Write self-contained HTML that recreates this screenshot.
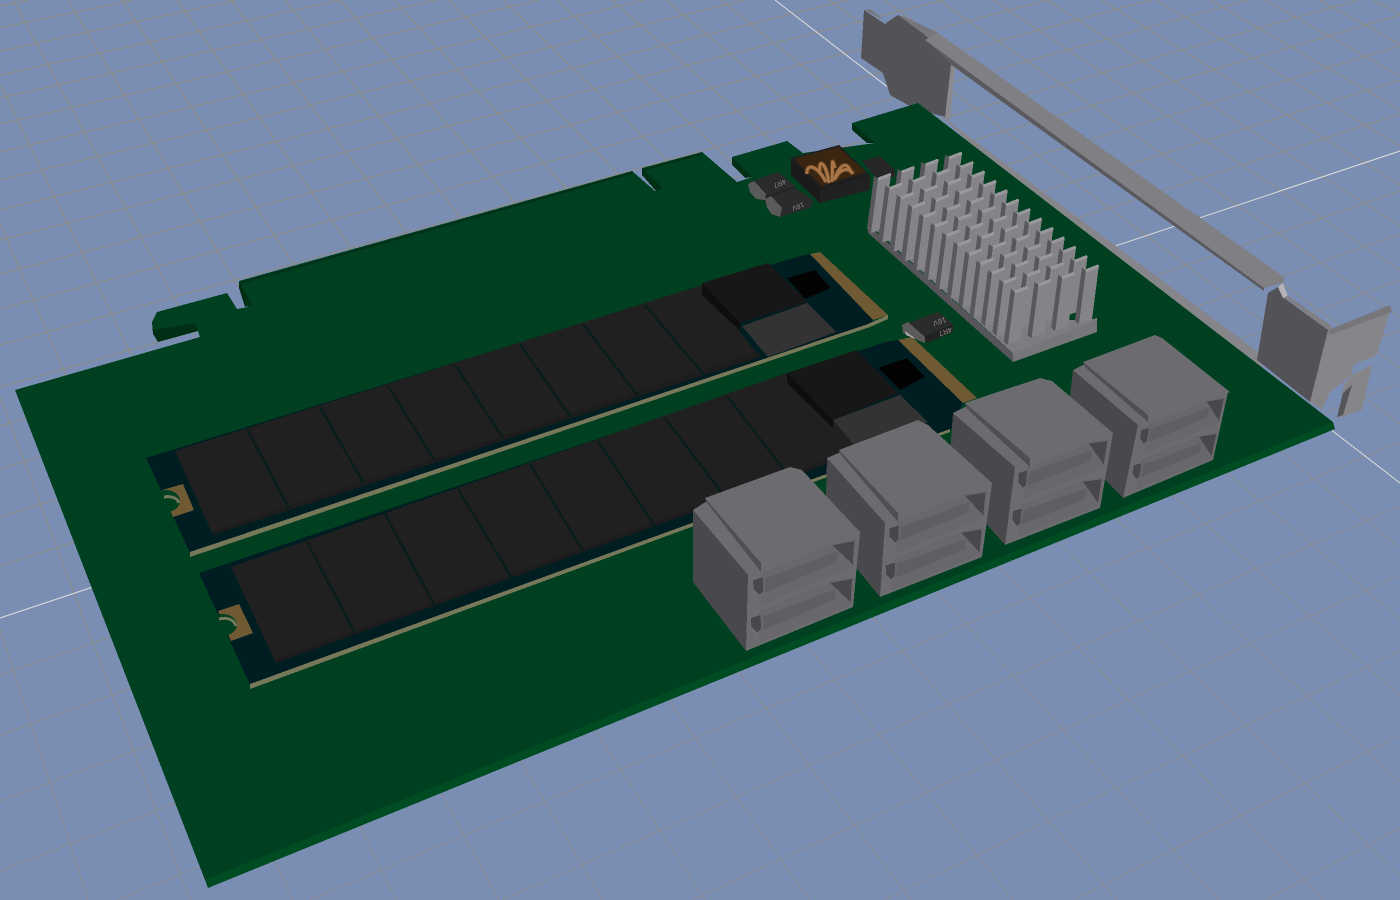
<!DOCTYPE html>
<html><head><meta charset="utf-8"><title>PCB 3D view</title>
<style>html,body{margin:0;padding:0;background:#7a8db3;width:1400px;height:900px;overflow:hidden}svg{display:block}text{font-family:"Liberation Sans",sans-serif}</style>
</head><body>
<svg xmlns="http://www.w3.org/2000/svg" width="1400" height="900" viewBox="0 0 1400 900" shape-rendering="crispEdges">
<defs>
<linearGradient id="gl" gradientUnits="userSpaceOnUse" x1="0" y1="0" x2="300" y2="900"><stop offset="0" stop-color="#8e8b7e"/><stop offset=".55" stop-color="#8d8c84"/><stop offset="1" stop-color="#888a92"/></linearGradient>
<g id="slot"><polygon points="13,5 77,3 99,9 98,46 14,48" fill="#68686c"/><polygon points="16,14 82,16 82,30 17,33" fill="#5f5f63"/><polygon points="77,5 97,11 97,42" fill="#48484c"/><polygon points="5,10 14,11 15,30 12,33 6,22" fill="#48484c"/></g>
<g id="front"><use href="#slot"/><use href="#slot" y="50"/></g>
<g id="pin"><polygon points="0,0 -4,-3 -11,50 -7,54" fill="#58585c"/><polygon points="0,0 13,-5 6,50 -7,54" fill="#848488"/><polygon points="0,0 -1,-1 12,-6 13,-5 13,-3 0,2" fill="#98989c"/></g>
<g id="row">
<use href="#pin" x="878" y="179"/><use href="#pin" x="889.4" y="188.4"/><use href="#pin" x="900.8" y="197.8"/><use href="#pin" x="912.2" y="207.2"/><use href="#pin" x="923.6" y="216.6"/><use href="#pin" x="935" y="226"/><use href="#pin" x="946.4" y="235.4"/><use href="#pin" x="957.8" y="244.8"/><use href="#pin" x="969.2" y="254.2"/><use href="#pin" x="980.6" y="263.6"/><use href="#pin" x="992" y="273"/><use href="#pin" x="1003.4" y="282.4"/><use href="#pin" x="1014.8" y="291.8"/>
</g>
</defs>
<rect width="1400" height="900" fill="#7a8db3"/>
<g stroke="url(#gl)" stroke-width="1" fill="none">
<path d="M0 6L29 0M0 28L133 0M0 51L237 0M0 75L341 0M0 98L437 0M0 124L539 0M0 152L645 0M0 180L746 0M0 210L847 0M0 240L944 0M0 274L1048 0M0 309L1151 0M0 345L1248 0M0 387L1358 0M0 426L1400 15M0 469L1400 46M0 517L1400 80M0 566L1400 114M0 675L1400 191M0 735L1400 234M0 801L1400 280M0 871L1400 330M117 900L1400 383M310 900L1400 442M502 900L1400 506M692 900L1400 575M884 900L1400 651M1074 900L1400 735M1265 900L1400 828"/>
<path d="M0 629L88 900M0 397L190 900M0 223L292 900M0 84L396 900M13 0L499 900M68 0L603 900M122 0L705 900M177 0L809 900M231 0L911 900M285 0L1013 900M340 0L1117 900M394 0L1219 900M449 0L1323 900M503 0L1400 876M557 0L1400 782M612 0L1400 696M666 0L1400 619M721 0L1400 548M829 0L1400 424M884 0L1400 368M938 0L1400 317M993 0L1400 270M1047 0L1400 226M1101 0L1400 185M1156 0L1400 146M1210 0L1400 110M1265 0L1400 76M1319 0L1400 44M1373 0L1400 14"/>
</g>
<path d="M0 618L1400 151M775 0L1400 483" stroke="#dcdcd8" stroke-width="1" fill="none"/>

<!-- bracket -->
<polygon points="864,10 870,9 887,22 898,15 905,17 938,33 925,40" fill="#77777b"/>
<polygon points="864,10 885,24 898,15 925,35 952,65 945,117 920,110 908,105 890,95 883,73 861,58" fill="#535357"/>
<polygon points="951,65 955,65 950,122 945,117" fill="#8a8a8e"/>
<polygon points="925,38 1264,285 1264,291 950,64" fill="#5a5a5e"/>
<polygon points="938,33 1284,277 1284,283 1264,288 925,40" fill="#808084"/>
<polygon points="940,115 1258,352 1262,366 1300,420 1000,172" fill="#86868a"/>
<polygon points="1268,293 1278,287 1284,298 1328,330 1310,402 1257,360" fill="#535357"/>
<polygon points="1278,287 1283,283 1288,297 1283,298" fill="#b4b4b8"/>
<polygon points="1284,297 1288,296 1332,326 1328,330" fill="#808084"/>
<polygon points="1328,330 1391,308 1377,355 1353,365 1352,375 1330,392 1322,410 1310,402" fill="#86868a"/>
<polygon points="1328,330 1390,305 1392,312 1330,335" fill="#77777b"/>
<polygon points="1352,375 1372,365 1362,410 1338,418 1344,385" fill="#86868a"/>
<polygon points="1343,393 1352,385 1343,415 1337,417" fill="#555559"/>

<!-- board -->
<polygon points="205,880 1333,422 1335,429 208,888" fill="#004c22"/>
<polygon points="15,390 200,337 195,323 154,330 152,322 157,312 227,293 237,309 248,307 239,281 632,171 655,191 663,188 642,168 702,152 737,182 752,177 732,157 787,141 803,153 875,143 852,123 918,103 1333,422 205,880" fill="#004020"/>
<polygon points="154,330 152,322 153,334 158,342 198,331 195,323" fill="#002f16"/>
<polygon points="732,157 732,165 745,178 752,177" fill="#002f16"/>
<polygon points="852,123 852,130 867,143 875,143" fill="#002f16"/>
<polygon points="642,168 642,175 656,191 663,188" fill="#002f16"/>
<polygon points="239,281 239,288 245,307 252,305" fill="#002f16"/>
<path d="M240 283L632 173M643 170L702 154" stroke="#003018" stroke-width="2" fill="none"/>

<!-- M.2 module 1 -->
<polygon points="146,458 800,256 810,254 873,320 868,328 190,553" fill="#001e22"/>
<polygon points="810,254 820,252 888,315 873,320" fill="#6f5a33"/>
<polygon points="190,552 868,324 888,315 888,319 870,327 190,557" fill="#77785a"/>
<polygon points="162,490 183,484 194,510 173,517" fill="#6f5a33"/>
<ellipse cx="166" cy="501" rx="14" ry="11" fill="#004020"/>
<path d="M164 497C170 496 177 497 179 503" stroke="#75795c" stroke-width="3" fill="none"/>
<polygon points="175,451 702,285 760,357 213,535" fill="#202020"/>
<polygon points="213,531 758,352 760,357 213,535" fill="#1c1c1c"/>
<g stroke="#0a1c1c" stroke-width="2.5" fill="none"><path d="M247 429L289 508M320 407L364 484M388 386L435 461M455 365L503 438M520 344L570 416M583 324L638 396M645 305L705 376"/></g>
<polygon points="702,283 768,263 807,302 740,323" fill="#171717"/>
<polygon points="702,283 740,323 740,331 702,295" fill="#0e0e0e"/>
<polygon points="742,326 807,303 836,332 768,357" fill="#333333"/>
<polygon points="787,278 815,270 831,288 805,299" fill="#030303"/>

<!-- M.2 module 2 -->
<polygon points="199,573 885,342 898,340 963,403 950,432 250,685" fill="#001e22"/>
<polygon points="898,340 912,337 977,398 963,403" fill="#6f5a33"/>
<polygon points="250,684 950,429 950,432 250,689" fill="#77785a"/>
<polygon points="218,611 239,604 253,633 231,641" fill="#6f5a33"/>
<ellipse cx="222" cy="625" rx="15" ry="11" fill="#004020"/>
<path d="M219 619C226 617 234 619 236 626" stroke="#75795c" stroke-width="3" fill="none"/>
<polygon points="231,567 787,373 833,420 860,452 276,663" fill="#202020"/>
<polygon points="276,659 860,448 860,452 276,663" fill="#1c1c1c"/>
<g stroke="#0a1c1c" stroke-width="2.5" fill="none"><path d="M307 542L355 633M385 514L435 606M458 489L512 578M530 464L583 551M598 441L655 526M665 418L725 497M727 396L785 471"/></g>
<polygon points="787,373 857,350 898,393 833,420" fill="#171717"/>
<polygon points="787,373 833,420 833,428 787,383" fill="#0e0e0e"/>
<polygon points="833,420 900,395 928,422 860,452" fill="#333333"/>
<polygon points="878,368 907,358 925,377 900,390" fill="#030303"/>

<!-- caps and inductor -->
<polygon points="750,182 778,172 795,186 762,198" fill="#2b2b2b"/>
<polygon points="762,198 795,186 795,192 767,204" fill="#222"/>
<polygon points="748,184 754,181 766,194 765,200 756,199 750,192" fill="#5a5a5a"/>
<polygon points="767,198 795,188 813,200 812,207 780,217" fill="#2b2b2b"/>
<polygon points="765,199 771,196 782,208 780,217 771,214 767,207" fill="#5a5a5a"/>
<text transform="translate(785,179) rotate(158)" font-size="7" fill="#8a8a8a">4R7</text>
<text transform="translate(803,202) rotate(158)" font-size="7" fill="#8a8a8a">16V</text>
<polygon points="862,161 880,156 895,170 895,177 877,179" fill="#262626"/>
<polygon points="791,158 791,175 820,203 820,190" fill="#1a1a1a"/>
<polygon points="820,190 870,175 870,190 820,203" fill="#212121"/>
<polygon points="791,158 839,145 870,175 820,190" fill="#1e1e1e"/>
<polygon points="794,159 838,147 866,172 822,186" fill="#3a2610"/>
<g shape-rendering="auto" fill="none">
<g stroke="#5a3818" stroke-width="5"><path d="M826 182C818 166 806 162 807 174M829 183C826 162 818 158 820 171M832 182C833 163 831 155 835 168M834 180C841 162 847 162 851 172M835 179C840 168 849 167 853 174"/></g>
<g stroke="#a87548" stroke-width="3"><path d="M826 182C818 166 806 162 807 174M829 183C826 162 818 158 820 171M832 182C833 163 831 155 835 168M834 180C841 162 847 162 851 172M835 179C840 168 849 167 853 174"/></g>
</g>

<polygon points="903,325 938,312 953,324 922,337" fill="#2b2b2b"/>
<polygon points="923,337 953,324 953,332 927,343" fill="#222"/>
<polygon points="902,325 908,322 925,337 925,343 917,340 903,333" fill="#5a5a5a"/>
<polygon points="905,331 912,336 915,339 906,335" fill="#a8a8a8"/>
<text transform="translate(945,317) rotate(160)" font-size="7.5" fill="#8a8a8a">16V</text>
<text transform="translate(951,327) rotate(160)" font-size="7.5" fill="#8a8a8a">4R7</text>

<!-- heatsink -->
<polygon points="868,225 868,233 1013,362 1013,353" fill="#55555a"/>
<polygon points="1013,353 1097,320 1097,332 1013,362" fill="#77777b"/>
<polygon points="869,224 1000,320 1097,320 1013,353" fill="#7d7d81"/>
<use href="#row" x="71.1" y="-21.3"/>
<use href="#row" x="47.4" y="-14.2"/>
<use href="#row" x="23.7" y="-7.1"/>
<use href="#row"/>
<polygon points="1005,345 1097,318 1097,320 1013,353" fill="#7d7d81"/>

<!-- connector D -->
<polygon points="1073,370 1065,440 1123,498 1138,425" fill="#48484d"/>
<polygon points="1138,425 1228,392 1213,460 1123,498" fill="#6c6c70"/>
<g transform="matrix(.9,-.35,-.15,.705,1138,425)"><use href="#front"/></g>
<polygon points="1148,415 1230,392 1148,422" fill="#6c6c70"/>
<polygon points="1073,370 1085,364 1148,422 1138,425" fill="#6c6c70"/>
<polygon points="1083,362 1085,367 1148,422 1148,415" fill="#4e4e53"/>
<polygon points="1083,362 1155,335 1162,338 1230,392 1148,415" fill="#6c6c70"/>

<!-- connector C -->
<polygon points="953,413 948,480 1005,545 1015,467" fill="#48484d"/>
<polygon points="1015,467 1113,433 1100,508 1005,545" fill="#6c6c70"/>
<g transform="matrix(.965,-.355,-.115,.765,1015,467)"><use href="#front"/></g>
<polygon points="1030,458 1113,433 1030,467" fill="#6c6c70"/>
<polygon points="953,413 967,406 1030,467 1015,467" fill="#6c6c70"/>
<polygon points="965,403 967,409 1030,467 1030,458" fill="#4e4e53"/>
<polygon points="965,403 1040,378 1052,381 1113,433 1030,458" fill="#6c6c70"/>

<!-- connector B -->
<polygon points="827,458 825,530 880,597 885,523" fill="#48484d"/>
<polygon points="885,523 992,483 982,557 880,597" fill="#6c6c70"/>
<g transform="matrix(1.045,-.4,-.075,.74,885,523)"><use href="#front"/></g>
<polygon points="898,513 992,483 898,522" fill="#6c6c70"/>
<polygon points="827,458 841,452 898,522 885,523" fill="#6c6c70"/>
<polygon points="839,450 841,455 898,522 898,513" fill="#4e4e53"/>
<polygon points="839,450 918,420 928,425 992,483 898,513" fill="#6c6c70"/>

<!-- connector A -->
<polygon points="693,510 693,582 746,651 748,575" fill="#48484d"/>
<polygon points="748,575 860,532 853,607 746,651" fill="#6c6c70"/>
<g transform="matrix(1.1,-.435,-.045,.755,748,575)"><use href="#front"/></g>
<polygon points="761,563 860,532 761,572" fill="#6c6c70"/>
<polygon points="693,510 707,501 761,572 748,575" fill="#6c6c70"/>
<polygon points="705,498 707,503 761,572 761,563" fill="#4e4e53"/>
<polygon points="705,498 790,467 802,470 860,532 761,563" fill="#6c6c70"/>
</svg>
</body></html>
